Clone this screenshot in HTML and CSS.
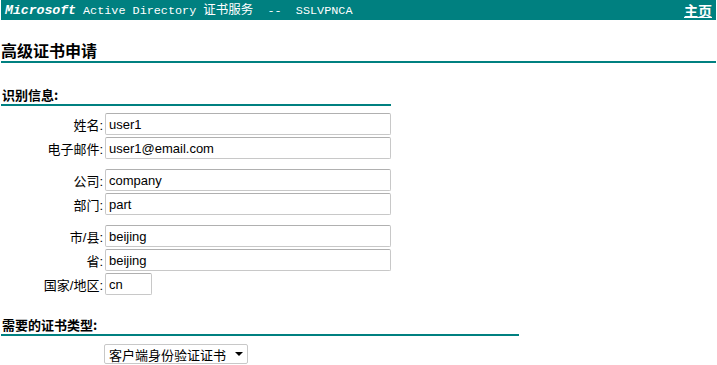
FILE: index.html
```html
<!DOCTYPE html>
<html lang="zh-CN">
<head>
<meta charset="utf-8">
<title>Microsoft Active Directory 证书服务</title>
<link rel="stylesheet" href="styles.css">
</head>
<body>
<header class="topbar">
  <div class="brand"><span class="ms">Microsoft</span> Active Directory <span class="cjk">证书服务</span>  --  SSLVPNCA</div>
  <a class="home" href="#">主页</a>
</header>
<h1 class="page-title">高级证书申请</h1>
<section class="section section-id">
  <h2 class="section-title">识别信息:</h2>
  <div class="form">
    <div class="group">
      <label class="row"><span class="lbl">姓名:</span><input class="field" value="user1"></label>
      <label class="row"><span class="lbl">电子邮件:</span><input class="field" value="user1@email.com"></label>
    </div>
    <div class="group">
      <label class="row"><span class="lbl">公司:</span><input class="field" value="company"></label>
      <label class="row"><span class="lbl">部门:</span><input class="field" value="part"></label>
    </div>
    <div class="group">
      <label class="row"><span class="lbl">市/县:</span><input class="field" value="beijing"></label>
      <label class="row"><span class="lbl">省:</span><input class="field" value="beijing"></label>
      <label class="row"><span class="lbl">国家/地区:</span><input class="field short" value="cn"></label>
    </div>
  </div>
</section>
<section class="section section-type">
  <h2 class="section-title">需要的证书类型:</h2>
  <div class="row select-row">
    <span class="lbl"></span>
    <div class="select"><span>客户端身份验证证书</span><svg class="caret" width="8" height="4" viewBox="0 0 8 4"><path d="M0 0h8L4 4z" fill="#000"/></svg></div>
  </div>
</section>
</body>
</html>
```
FILE: styles.css
```css
html, body {
  margin: 0;
  padding: 0;
  background: #fff;
}
body {
  font-family: "Liberation Sans", Arial, "Noto Sans CJK SC", sans-serif;
  font-size: 13px;
  color: #000;
}
.topbar {
  background: #008080;
  height: 20px;
  margin: 0 1px;
  padding: 0 4px 0 4px;
  display: flex;
  align-items: center;
  justify-content: space-between;
  color: #fff;
}
.brand {
  font-family: "Liberation Mono", "Courier New", "Noto Sans CJK SC", monospace;
  font-size: 11.8px;
  white-space: pre;
  line-height: 20px;
}
.brand .ms {
  font-weight: bold;
  font-style: italic;
  font-size: 13.3px;
  letter-spacing: -0.1px;
}
.brand .cjk {
  font-family: "Noto Sans CJK SC", sans-serif;
  font-size: 12.5px;
}
.home {
  color: #fff;
  font-weight: bold;
  font-size: 14px;
  font-family: "Noto Sans CJK SC", sans-serif;
  text-decoration: underline;
  line-height: 20px;
}
.page-title {
  margin: 19px 1px 0 1px;
  font-family: "Noto Sans CJK SC", sans-serif;
  font-size: 16px;
  font-weight: bold;
  line-height: 22px;
  padding: 0;
  border-bottom: 2px solid #008080;
}
.section-title {
  margin: 0;
  font-family: "Noto Sans CJK SC", sans-serif;
  font-size: 13px;
  font-weight: bold;
  line-height: 16px;
  border-bottom: 2px solid #008080;
  padding: 0 0 1px 1px;
}
.section-id {
  margin-top: 24px;
  width: 391px;
}
.section-id .section-title {
  margin-left: 1px;
}
.form {
  display: flex;
  flex-direction: column;
  gap: 10px;
  margin-top: 7px;
}
.group {
  display: flex;
  flex-direction: column;
  gap: 2px;
}
.row {
  display: flex;
  align-items: center;
  gap: 2px;
}
.lbl {
  width: 103px;
  text-align: right;
  flex: none;
  font-family: "Liberation Sans", Arial, "Noto Sans CJK SC", sans-serif;
}
.field {
  box-sizing: border-box;
  width: 287px;
  height: 22px;
  margin: 0;
  border: 1px solid #c8c8c8;
  border-top-color: #b0b0b0;
  border-radius: 2px;
  padding: 0 3px;
  font-family: "Liberation Sans", Arial, sans-serif;
  font-size: 13px;
  color: #000;
  background: #fff;
}
.field.short {
  width: 47px;
}
.section-type {
  margin-top: 22px;
  width: 519px;
}
.section-type .section-title {
  margin-left: 1px;
}
.select-row {
  margin-top: 8px;
  gap: 1px;
}
.select {
  box-sizing: border-box;
  width: 144px;
  height: 20px;
  border: 1px solid #c8c8c8;
  border-radius: 2px;
  display: flex;
  align-items: center;
  justify-content: space-between;
  padding: 0 4px 0 4px;
  font-family: "Noto Sans CJK SC", sans-serif;
  font-size: 13px;
  background: #fff;
}
.caret {
  display: block;
}
```
